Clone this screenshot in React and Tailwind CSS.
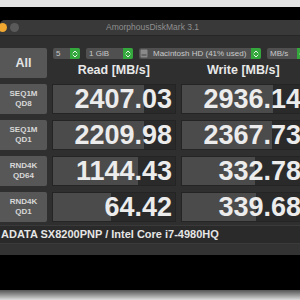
import React from 'react';

const Stepper = () => (
    <div className="w-[10px] h-full bg-[#34a83c] rounded-r-[2px] flex items-center justify-center shrink-0">
        <svg width="6" height="8" viewBox="0 0 6 8" fill="none" stroke="#e8f5e8" strokeWidth="1" strokeLinecap="round" strokeLinejoin="round">
            <path d="M1 3 L3 1 L5 3" />
            <path d="M1 5 L3 7 L5 5" />
        </svg>
    </div>
);

const Select = ({ width, children }) => (
    <div className={`${width} h-[11px] flex bg-[#505050] rounded-[2px] shrink-0`}>
        <div className="flex-1 flex items-center pl-[3px] text-[8px] leading-none text-[#c9c9c9] whitespace-nowrap overflow-hidden">
            {children}
        </div>
        <Stepper />
    </div>
);

const rows = [
    { a: 'SEQ1M', b: 'QD8', read: '2407.03', write: '2936.14', rw: 91, ww: 91 },
    { a: 'SEQ1M', b: 'QD1', read: '2209.98', write: '2367.73', rw: 91, ww: 90 },
    { a: 'RND4K', b: 'QD64', read: '1144.43', write: '332.78', rw: 85, ww: 73 },
    { a: 'RND4K', b: 'QD1', read: '64.42', write: '339.68', rw: 58, ww: 74 },
];

const ValueCell = ({ value, fill }) => (
    <div className="relative h-[30px] bg-[#2a2a2a] border border-[#242424] overflow-hidden">
        <div className="absolute left-0 top-0 bottom-0 bg-[#4b4b4b]" style={{ width: fill }} />
        <div className="relative h-full flex items-center justify-end pr-[3px] text-[27px] font-bold leading-none text-[#ececec]">
            {value}
        </div>
    </div>
);

export default function App() {
    return (
        <div className="w-[300px] h-[300px] bg-black overflow-hidden flex flex-col" style={{ fontFamily: '"Liberation Sans", Arial, sans-serif' }}>
            <div className="h-[7px] shrink-0 bg-[#e4e4e4]" />
            <div className="h-[13px] shrink-0" />

            <div className="w-[310px] h-[235px] shrink-0 bg-[#2f2f2f] rounded-t-[5px] flex flex-col">
                {/* title bar */}
                <div className="h-[16px] shrink-0 bg-[#393939] border-b border-[#262626] flex items-center rounded-t-[5px]">
                    <div className="flex items-center gap-[3px] -ml-[2px] w-[108px] shrink-0">
                        <div className="w-[9px] h-[9px] rounded-full bg-[#f0a830]" />
                        <div className="w-[9px] h-[9px] rounded-full bg-[#5a5a5a]" />
                    </div>
                    <span className="text-[8.5px] leading-none text-[#8f8f8f] whitespace-nowrap">AmorphousDiskMark 3.1</span>
                </div>

                {/* body */}
                <div className="pt-[12px] grid grid-cols-[47px_124px_124px] gap-x-[5px] gap-y-[6px]">
                    <div className="h-[30px] bg-[#575757] rounded-r-[2px] flex items-center justify-center text-[12.5px] font-bold text-[#e4e4e4]">
                        All
                    </div>
                    <div className="col-span-2 h-[30px] flex flex-col">
                        <div className="flex items-center gap-[6px] ml-[1px]">
                            <Select width="w-[27px]">5</Select>
                            <Select width="w-[47px]">1 GiB</Select>
                            <Select width="w-[122px]">
                                <svg width="8" height="9" viewBox="0 0 8 9" className="mr-[5px] -ml-[2px] shrink-0">
                                    <rect x="0.5" y="0.5" width="7" height="8" rx="1" fill="#8a8a8a" />
                                    <rect x="1.5" y="5.5" width="5" height="1" fill="#444" />
                                </svg>
                                Macintosh HD (41% used)
                            </Select>
                            <Select width="w-[40px]">MB/s</Select>
                        </div>
                        <div className="flex-1 grid grid-cols-2 gap-x-[6px] items-center pt-[3px]">
                            <div className="text-center text-[12.5px] font-bold text-[#e8e8e8] leading-none">Read [MB/s]</div>
                            <div className="text-center text-[12.5px] font-bold text-[#e8e8e8] leading-none">Write [MB/s]</div>
                        </div>
                    </div>

                    {rows.map((r, i) => (
                        <React.Fragment key={i}>
                            <div className="h-[30px] bg-[#575757] rounded-r-[2px] flex flex-col items-center justify-center text-[8px] font-bold leading-[10px] text-[#d8d8d8]">
                                <span>{r.a}</span>
                                <span>{r.b}</span>
                            </div>
                            <ValueCell value={r.read} fill={r.rw} />
                            <ValueCell value={r.write} fill={r.ww} />
                        </React.Fragment>
                    ))}
                </div>

                {/* footer */}
                <div className="mt-[3px] h-[19px] shrink-0 bg-[#2a2a2a] border-y border-[#3a3a3a] flex items-center pl-[1px]">
                    <span className="text-[11px] font-bold text-[#e6e6e6] leading-none whitespace-nowrap">ADATA SX8200PNP / Intel Core i7-4980HQ</span>
                </div>
                <div className="flex-1 bg-[#333333]" />
            </div>

            <div className="h-[35px] shrink-0" />
            <div className="flex-1 bg-gradient-to-b from-[#555555] to-[#dddddd]" />
        </div>
    );
}
